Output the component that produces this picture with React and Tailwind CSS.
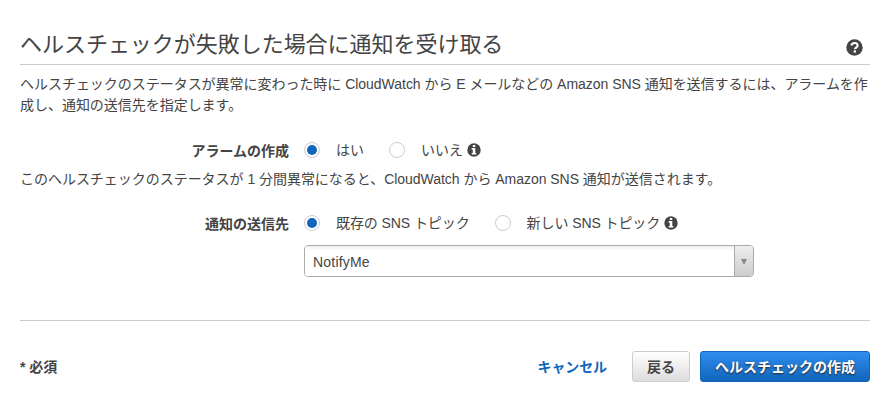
import { useState } from 'react'

function HelpIcon() {
  return (
    <svg width="17" height="17" viewBox="0 0 17 17" className="mt-1.5 shrink-0">
      <circle cx="8.5" cy="8.5" r="8.2" fill="#444" />
      <path d="M5.3 6.3C5.9 4.6 7.1 4 8.6 4c1.8 0 3 1 3 2.5 0 2-2.6 2.1-2.6 3.7" fill="none" stroke="#fff" strokeWidth="2.1" />
      <path d="M7.7 11.4h2.3v2.2H7.7z" fill="#fff" />
    </svg>
  )
}

function InfoIcon() {
  return (
    <svg width="14" height="14" viewBox="0 0 14 14" className="ml-1 shrink-0">
      <circle cx="7" cy="7" r="6.7" fill="#444" />
      <path d="M5.8 1.9h2.5v2.1H5.8zM4.7 5.1h3.6v4.8h1v1.6H4.7V9.9h1.1V6.7H4.7z" fill="#fff" />
    </svg>
  )
}

function Radio({ label, checked, onChange, name, className = '' }) {
  return (
    <label className={`flex items-center h-5 whitespace-nowrap cursor-pointer ${className}`}>
      <input type="radio" name={name} checked={checked} onChange={onChange} className="sr-only" />
      <span className="flex items-center justify-center w-4 h-4 mr-4 rounded-full border border-[#ccc] bg-white shrink-0">
        {checked && <span className="w-2.5 h-2.5 rounded-full bg-[#1166bb]" />}
      </span>
      {label}
    </label>
  )
}

function Row({ label, children }) {
  return (
    <div className="flex items-center h-5">
      <div className="w-[269px] mr-[15px] pt-0.5 text-right font-bold whitespace-nowrap shrink-0">{label}</div>
      {children}
    </div>
  )
}

function App() {
  const [alarm, setAlarm] = useState(true)
  const [existing, setExisting] = useState(true)

  return (
    <div className="w-[883px] h-[418px] bg-white pl-5 pr-[13px] pt-6 overflow-hidden text-sm leading-[21px] text-[#444] font-['Liberation_Sans','Noto_Sans_CJK_JP',sans-serif]">
      <header className="flex items-center justify-between h-[41px] pr-[7px] border-b border-[#ccc]">
        <h1 className="text-[22px] leading-8 pt-0.5 tracking-[-0.03px] whitespace-nowrap">ヘルスチェックが失敗した場合に通知を受け取る</h1>
        <HelpIcon />
      </header>

      <p className="mt-[9px] tracking-[-0.03px] whitespace-nowrap">
        ヘルスチェックのステータスが異常に変わった時に CloudWatch から E メールなどの Amazon SNS 通知を送信するには、アラームを作
        <br />
        成し、通知の送信先を指定します。
      </p>

      <div className="mt-6">
        <Row label="アラームの作成">
          <Radio name="alarm" label="はい" checked={alarm} onChange={() => setAlarm(true)} />
          <Radio name="alarm" label="いいえ" checked={!alarm} onChange={() => setAlarm(false)} className="ml-[25px]" />
          <InfoIcon />
        </Row>
      </div>

      <p className="mt-[9px] tracking-[-0.03px] whitespace-nowrap">
        このヘルスチェックのステータスが 1 分間異常になると、CloudWatch から Amazon SNS 通知が送信されます。
      </p>

      <div className="mt-[23px]">
        <Row label="通知の送信先">
          <Radio name="topic" label="既存の SNS トピック" checked={existing} onChange={() => setExisting(true)} className="tracking-[-0.08px]" />
          <Radio name="topic" label="新しい SNS トピック" checked={!existing} onChange={() => setExisting(false)} className="ml-[25px] tracking-[-0.08px]" />
          <InfoIcon />
        </Row>
      </div>

      <div className="flex w-[450px] h-8 ml-[284px] mt-3 rounded border border-[#aaa] overflow-hidden">
        <div className="flex-1 pl-2 pt-px leading-[31px] tracking-[0.2px] bg-linear-to-b from-[#eee] from-0% to-white to-15%">NotifyMe</div>
        <div className="flex items-center justify-center w-[19px] pt-px pr-px border-l border-[#aaa] bg-linear-to-b from-[#eee] to-[#ccc]">
          <svg width="6" height="5" viewBox="0 0 6 5" fill="#888"><path d="M0 0h6L3.5 5h-1z" /></svg>
        </div>
      </div>

      <footer className="flex items-center h-[91px] mt-[43px] border-t border-[#ccc]">
        <span className="pt-0.5 font-bold">* 必須</span>
        <a href="#" className="ml-auto mr-[25px] pt-0.5 tracking-[-0.1px] font-bold text-[#1166bb]">キャンセル</a>
        <button type="button" className="w-[58px] h-[31px] mr-2.5 pt-0.5 rounded-[3px] border border-[#ccc] bg-linear-to-b from-white to-[#ddd] font-bold">
          戻る
        </button>
        <button type="button" className="w-[170px] h-[31px] pt-0.5 rounded-[3px] border border-[#1166bb] bg-linear-to-b from-[#2e8dee] to-[#1166bb] font-bold text-white whitespace-nowrap [text-shadow:0_1px_2px_#222]">
          ヘルスチェックの作成
        </button>
      </footer>
    </div>
  )
}

export default App
